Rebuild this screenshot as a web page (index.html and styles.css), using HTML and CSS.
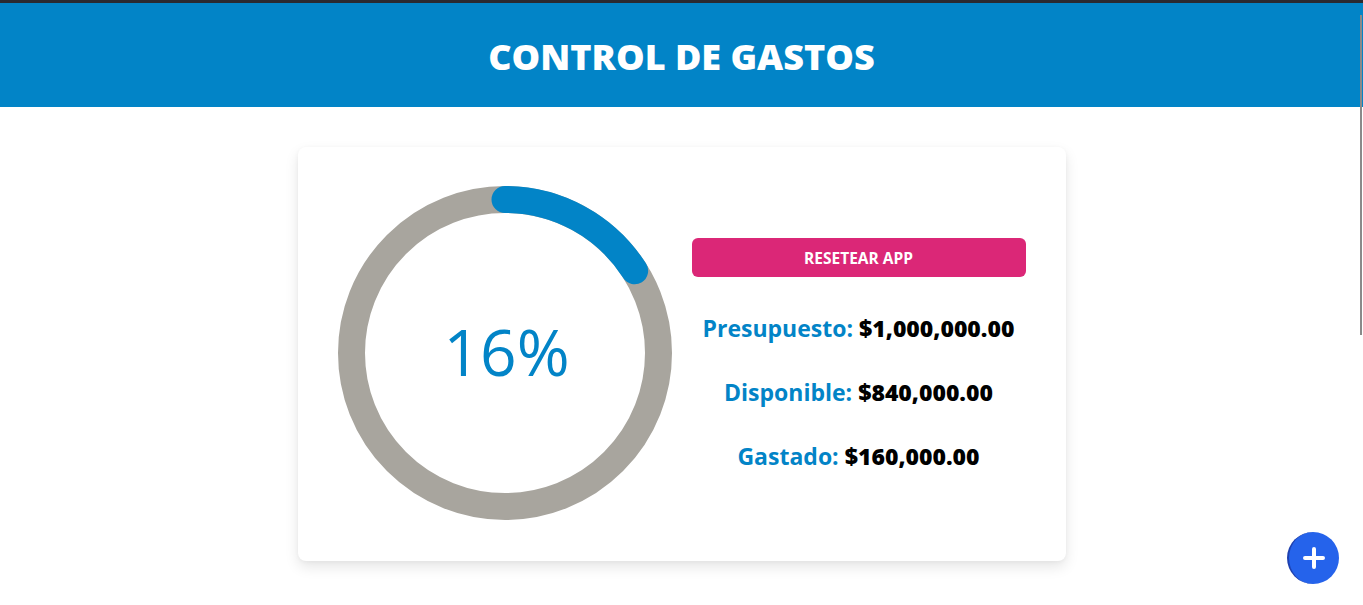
FILE: index.html
```html
<!DOCTYPE html>
<html lang="es">
<head>
<meta charset="utf-8">
<title>Control de Gastos</title>
<link rel="stylesheet" href="styles.css">
</head>
<body>
<div class="topline"></div>
<header class="header">
  <h1 class="title">CONTROL DE GASTOS</h1>
</header>
<main class="main">
  <section class="card">
    <div class="chart">
      <svg class="ring" viewBox="0 0 334 334" width="334" height="334">
        <circle cx="167" cy="167" r="153.5" fill="none" stroke="#a8a59e" stroke-width="27"/>
        <circle cx="167" cy="167" r="153.5" fill="none" stroke="#0284c7" stroke-width="27" stroke-linecap="round"
          stroke-dasharray="154.3 1000" transform="rotate(-90 167 167)"/>
      </svg>
      <span class="percent">16%</span>
    </div>
    <div class="info">
      <button class="reset">RESETEAR APP</button>
      <p class="row"><span class="label">Presupuesto:</span> <span class="value">$1,000,000.00</span></p>
      <p class="row"><span class="label">Disponible:</span> <span class="value">$840,000.00</span></p>
      <p class="row"><span class="label">Gastado:</span> <span class="value">$160,000.00</span></p>
    </div>
  </section>
</main>
<div class="scrollthumb"></div>
<button class="fab" aria-label="Nuevo gasto">
  <svg viewBox="0 0 24 24" width="24" height="24"><path d="M12 3v18M3 12h18" stroke="#fff" stroke-width="4" stroke-linecap="round" fill="none"/></svg>
</button>
</body>
</html>
```
FILE: styles.css
```css
html {
  overflow: hidden;
}
body {
  margin: 0;
  padding: 0;
  background: #ffffff;
  font-family: "Open Sans", "Noto Sans", sans-serif;
}
.topline {
  height: 3px;
  background: #2a2a30;
}
.header {
  background: #0284c7;
  height: 104px;
  display: flex;
  align-items: center;
  justify-content: center;
}
.title {
  margin: 0;
  color: #ffffff;
  font-size: 36px;
  font-weight: 800;
  letter-spacing: 0;
  padding-top: 2px;
}
.main {
  display: flex;
  justify-content: center;
  padding-top: 40px;
  padding-bottom: 40px;
}
.card {
  width: 688px;
  padding: 39px 40px 41px;
  background: #ffffff;
  border-radius: 8px;
  box-shadow: 0 6px 14px rgba(0, 0, 0, 0.10), 0 1px 4px rgba(0, 0, 0, 0.04);
  display: grid;
  grid-template-columns: 334px 334px;
  column-gap: 20px;
  align-items: center;
}
.chart {
  position: relative;
  width: 334px;
  height: 334px;
}
.ring {
  display: block;
}
.percent {
  position: absolute;
  inset: 0;
  display: flex;
  align-items: center;
  justify-content: center;
  color: #0284c7;
  font-size: 64px;
  font-weight: 400;
  padding-left: 4px;
  padding-bottom: 4px;
}
.info {
  display: flex;
  flex-direction: column;
  align-items: stretch;
  text-align: center;
  padding-top: 4px;
}
.reset {
  height: 39px;
  border: none;
  border-radius: 6px;
  background: #db2777;
  color: #ffffff;
  font-family: "Open Sans", "Noto Sans", sans-serif;
  font-weight: 700;
  font-size: 15.5px;
  margin-bottom: 35px;
}
.row {
  margin: 0 0 32px;
  font-size: 23px;
  font-weight: 700;
  line-height: 32px;
}
.row:last-child {
  margin-bottom: 0;
}
.label {
  color: #0284c7;
}
.value {
  color: #000000;
  font-weight: 800;
}
.scrollthumb {
  position: absolute;
  right: 1px;
  top: 15px;
  width: 2px;
  height: 320px;
  background: #8a8a8a;
}
.fab {
  position: absolute;
  left: 1287px;
  top: 532px;
  width: 52px;
  height: 52px;
  border-radius: 50%;
  border: none;
  border-left: 2px solid #1e40af;
  background: #2563eb;
  display: flex;
  align-items: center;
  justify-content: center;
  padding: 0;
}
```
